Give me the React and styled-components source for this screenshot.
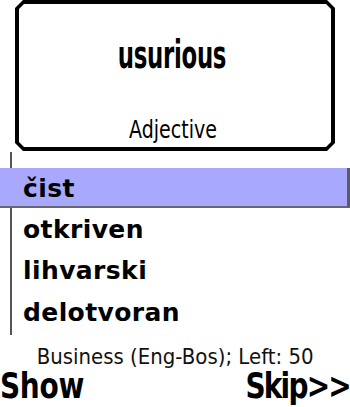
import React from 'react';
import styled, { createGlobalStyle } from 'styled-components';

const GlobalStyle = createGlobalStyle`
  html, body {
    margin: 0;
    padding: 0;
    background: #ffffff;
  }
  body {
    font-family: "DejaVu Sans", "Liberation Sans", sans-serif;
    color: #000000;
  }
`;

const Screen = styled.div`
  width: 350px;
  height: 407px;
  overflow: hidden;
  display: flex;
  flex-direction: column;
  background: #ffffff;
`;

const CardFrame = styled.div`
  margin: 0 15px;
  height: 151px;
  padding: 4px;
  box-sizing: border-box;
  background: #000000;
  clip-path: polygon(8px 0, calc(100% - 8px) 0, 100% 8px, 100% calc(100% - 8px),
    calc(100% - 8px) 100%, 8px 100%, 0 calc(100% - 8px), 0 8px);
`;

const CardBody = styled.div`
  height: 100%;
  background: #ffffff;
  display: flex;
  flex-direction: column;
  align-items: center;
  clip-path: polygon(5px 0, calc(100% - 5px) 0, 100% 5px, 100% calc(100% - 5px),
    calc(100% - 5px) 100%, 5px 100%, 0 calc(100% - 5px), 0 5px);
`;

const Stretched = styled.span`
  display: inline-block;
  white-space: nowrap;
  transform: ${p => `scale(${p.$sx || 1}, ${p.$sy || 1})`};
  transform-origin: center;
`;

const Word = styled.div`
  margin-top: 36px;
  font-size: 24px;
  font-weight: bold;
  line-height: 30px;
  letter-spacing: -0.3px;
  margin-left: -6px;
`;

const PartOfSpeech = styled.div`
  margin-top: auto;
  margin-bottom: 7px;
  font-size: 19px;
  line-height: 22px;
  margin-left: -4px;
`;

const ListArea = styled.div`
  position: relative;
  padding-top: 17px;
  height: 184px;
  box-sizing: border-box;
  display: flex;
  flex-direction: column;
  &::before {
    content: '';
    position: absolute;
    left: 10px;
    top: 1px;
    width: 2px;
    height: 183px;
    background: #555555;
  }
`;

const Option = styled.div`
  position: relative;
  z-index: 1;
  box-sizing: border-box;
  height: ${p => (p.$selected ? '40px' : '41.5px')};
  padding: ${p => (p.$selected ? '2px 0 0 23px' : '0 0 4px 23px')};
  margin-bottom: ${p => (p.$selected ? '2.5px' : '0')};
  display: flex;
  align-items: center;
  font-size: 25px;
  font-weight: bold;
  line-height: 1;
  letter-spacing: 0.4px;
  background: ${p => (p.$selected ? '#a8a8fc' : 'transparent')};
  border-right: ${p => (p.$selected ? '3px solid #5a5a6a' : 'none')};
  border-bottom: ${p => (p.$selected ? '2px solid #666670' : 'none')};
`;

const Status = styled.div`
  margin-top: 10px;
  text-align: center;
  font-size: 19px;
  line-height: 22px;
  color: #111111;
`;

const SoftKeys = styled.div`
  margin-top: 4px;
  display: flex;
  justify-content: space-between;
  align-items: center;
  font-size: 28px;
  font-weight: bold;
  line-height: 32px;
`;

const SoftKey = styled.span`
  display: inline-block;
  transform: scale(1, 1.25);
  transform-origin: ${p => (p.$right ? 'right center' : 'left center')};
  letter-spacing: ${p => (p.$right ? '-1.8px' : '-0.3px')};
`;

const options = ['čist', 'otkriven', 'lihvarski', 'delotvoran'];

export default function App() {
  return (
    <Screen>
      <GlobalStyle />
      <CardFrame>
        <CardBody>
          <Word>
            <Stretched $sx={0.95} $sy={1.65}>usurious</Stretched>
          </Word>
          <PartOfSpeech>
            <Stretched $sx={1} $sy={1.3}>Adjective</Stretched>
          </PartOfSpeech>
        </CardBody>
      </CardFrame>
      <ListArea>
        {options.map((o, i) => (
          <Option key={o} $selected={i === 0}>
            {o}
          </Option>
        ))}
      </ListArea>
      <Status>
        <Stretched $sx={1.04} $sy={1.15}>Business (Eng-Bos); Left: 50</Stretched>
      </Status>
      <SoftKeys>
        <SoftKey>Show</SoftKey>
        <SoftKey $right>Skip&gt;&gt;</SoftKey>
      </SoftKeys>
    </Screen>
  );
}
